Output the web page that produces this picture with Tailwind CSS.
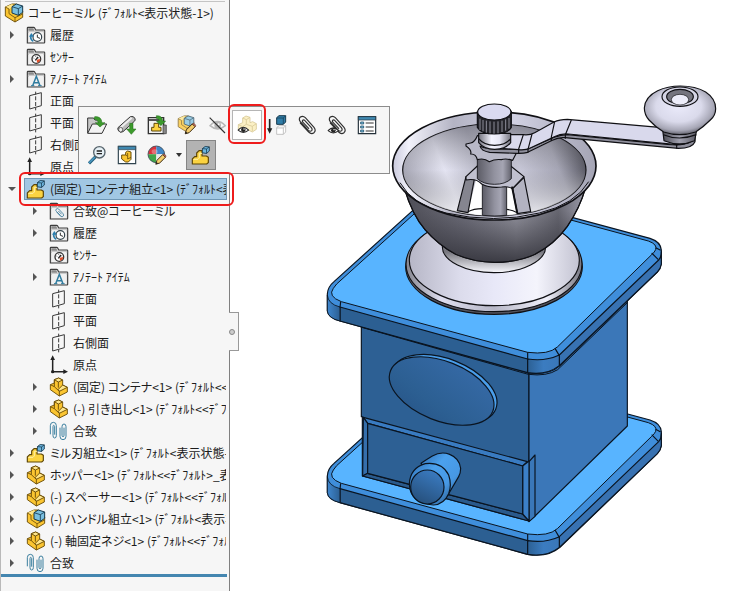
<!DOCTYPE html>
<html lang="ja">
<head>
    <meta charset="UTF-8">
    <meta name="viewport" content="width=device-width, initial-scale=1.0">
    <title>コーヒーミル</title>
    <script src="https://cdn.jsdelivr.net/npm/@tailwindcss/browser@4"></script>
</head>
<body class="bg-white font-['Noto_Sans_CJK_JP',sans-serif] text-[12px] text-[#1c1c1c]">

    <!-- Icon sprites -->
    <svg class="hidden">
        <symbol id="i-folder" viewBox="0 0 60 60">
            <path d="M4 54V9q0-2 2-2h17q2 0 3 2l3 6h25q2 0 2 2v35q0 2-2 2z" fill="#e3e3e3" stroke="#3d3d3d" stroke-width="3.5"/>
            <path d="M7 10h15l3 7H7z" fill="#8a8a8a"/>
            <path d="M5 21h51" stroke="#999" stroke-width="2"/>
            <rect x="9" y="21" width="43" height="30" fill="#f0f0f0"/>
        </symbol>
        <symbol id="i-history" viewBox="0 0 60 60">
            <use href="#i-folder"/>
            <circle cx="34" cy="36" r="13" fill="#fff" stroke="#34444d" stroke-width="3.5"/>
            <path d="M34 29v8l8 3" fill="none" stroke="#333" stroke-width="3"/>
            <path d="M22 49q-10-6-7-17" fill="none" stroke="#2d7fae" stroke-width="5"/>
            <path d="M9 35l7-11 8 11z" fill="#2d7fae"/>
        </symbol>
        <symbol id="i-sensor" viewBox="0 0 60 60">
            <use href="#i-folder"/>
            <circle cx="31" cy="36" r="13" fill="#fff" stroke="#333" stroke-width="4"/>
            <path d="M32 38l11-2q0 9-10 11z" fill="#e0502c"/>
            <path d="M28 40l8-10" stroke="#222" stroke-width="4"/>
            <path d="M22 33l3 1m4-7v3m10 2l-2 1" stroke="#444" stroke-width="2"/>
        </symbol>
        <symbol id="i-note" viewBox="0 0 60 60">
            <use href="#i-folder"/>
            <path d="M20 50l11-28 11 28M25 41h12" fill="none" stroke="#2f7c9f" stroke-width="4.5"/>
            <path d="M15 50h10m11 0h11" stroke="#2f7c9f" stroke-width="3"/>
        </symbol>
        <symbol id="i-matefolder" viewBox="0 0 60 60">
            <use href="#i-folder"/>
            <path d="M23 33l12 13q5 3 8-1 2-4-1-7L29 24q-4-3-8 1-2 3 1 6l13 13m-7-14l10 10" fill="none" stroke="#3a7a9a" stroke-width="2.5"/>
        </symbol>
        <symbol id="i-plane" viewBox="0 0 60 60">
            <path d="M11 14l35-9v39l-35 10z" fill="none" stroke="#3a3a3a" stroke-width="3"/>
            <path d="M29 2v9m0 5v12m0 5v12m0 5v8" stroke="#3a3a3a" stroke-width="3"/>
        </symbol>
        <symbol id="i-origin" viewBox="0 0 60 60">
            <path d="M11 12v38h34" fill="none" stroke="#222" stroke-width="4.5"/>
            <path d="M11 1l7 14H4zM57 50l-14 7V43z" fill="#222"/>
            <circle cx="11" cy="50" r="5" fill="#222"/>
        </symbol>
        <symbol id="i-part" viewBox="0 0 60 60">
            <g stroke="#6b4e08" stroke-width="2.8" stroke-linejoin="round">
                <path d="M16 8l13-5 12 6v15l14 7v14L31 57 4 38V23l12-5z" fill="#fbc531"/>
                <path d="M16 8l13-5 12 6-13 6zM28 37l13-13 14 7-24 12z" fill="#ffe68a"/>
                <path d="M28 15v17M4 23l12 6V8M16 29l15 14v14" fill="none"/>
            </g>
        </symbol>
        <symbol id="i-cube" viewBox="0 0 24 24">
            <path d="M2 8l8-6 12 1v12l-8 7-12-2z" fill="#6db5dd" stroke="#173a4e" stroke-width="2.5" stroke-linejoin="round"/>
            <path d="M2 8l12 1 8-6M14 9v13" fill="none" stroke="#173a4e" stroke-width="2.2"/>
        </symbol>
        <symbol id="i-asm" viewBox="0 0 60 60">
            <path d="M4 57V42l7-7h6V24l7-7h9v16h13l6 4v16l-5 4z" fill="#fbd341" stroke="#5d4607" stroke-width="3.5" stroke-linejoin="round"/>
            <path d="M7 43h14l4-4V25h8" fill="none" stroke="#fff0a8" stroke-width="3"/>
            <use href="#i-cube" x="32" y="2" width="25" height="26"/>
        </symbol>
        <symbol id="i-asmpart" viewBox="0 0 60 60">
            <path d="M4 12l20-9h14l18 22v18L33 57 4 39z" fill="#fbc531" stroke="#6b4e08" stroke-width="2.8" stroke-linejoin="round"/>
            <path d="M4 12l20-9 6 5-15 10z" fill="#ffe68a"/>
            <path d="M4 12l11 6v14l18 12v13M33 44l23-11" fill="none" stroke="#6b4e08" stroke-width="2.5"/>
            <path d="M24 11l13-8 19 6v19l-13 9-19-7z" fill="#79bfe0" stroke="#173a4e" stroke-width="3" stroke-linejoin="round"/>
            <path d="M24 11l19 6 13-8M43 17v20" fill="none" stroke="#173a4e" stroke-width="2.5"/>
        </symbol>
        <symbol id="i-mates" viewBox="0 0 60 60">
            <g fill="none" stroke="#3b7f9e" stroke-width="3">
                <path d="M4 40V14Q4 4 13 4t9 10v30q0 7-5 7t-5-7V17q0-4 2-4t3 4v24"/>
                <path d="M33 20v26q0 10 9 10t9-10V17q0-8-6-8t-6 8v26q0 4 3 4t3-4V20"/>
            </g>
        </symbol>
        <symbol id="i-pencil" viewBox="0 0 30 30">
            <path d="M2 28l3-10L20 3l7 7-15 15z" fill="#f5ce6c" stroke="#3c2b12" stroke-width="2.5" stroke-linejoin="round"/>
            <path d="M20 3l3-2 6 6-2 3z" fill="#d9706a" stroke="#3c2b12" stroke-width="1.5"/>
            <path d="M2 28l2-6 4 4z" fill="#222"/>
        </symbol>
        <symbol id="i-eye" viewBox="0 0 34 22">
            <path d="M2 13Q17-3 32 13 17 26 2 13z" fill="#fff" stroke="#2b2b2b" stroke-width="3"/>
            <circle cx="17" cy="12" r="6.5" fill="#222"/>
            <circle cx="19" cy="10" r="2" fill="#fff"/>
        </symbol>
        <symbol id="i-clip" viewBox="0 0 60 60">
            <path d="M10 24l25 27q8 8 16 2 7-7 0-16L25 8Q18 1 10 6q-6 6 0 14l24 26q6 5 10 1 3-4-1-9L23 16q-4-3-6 0-2 3 1 6l17 18" fill="none" stroke="#2f2f2f" stroke-width="3.5" stroke-linecap="round"/>
        </symbol>
    </svg>

    <div class="relative flex h-screen overflow-hidden">

        <!-- Feature tree -->
        <nav aria-label="FeatureManager" class="relative flex w-[230px] shrink-0 flex-col border-x border-l-[#b9b9b9] border-r-[#808080] bg-[#f6f6f6]">
            <div class="mx-1 h-0.5 border-b border-[#c4c4c4]"></div>
            <ul id="tree" class="mr-0.5"></ul>
            <div class="mr-0.5 h-[3px] bg-[#4486b0]"></div>
            <!-- Panel splitter -->
            <button aria-label="パネルを閉じる" class="absolute top-[312px] -right-2.5 flex h-[39px] w-2.5 items-center border border-l-0 border-[#999] bg-[#f6f6f6]">
                <span class="size-1.5 rounded-full border border-[#888] bg-[#ccc]"></span>
            </button>
        </nav>

        <!-- Graphics area -->
        <main class="min-w-0 flex-1">
            <svg class="h-full w-full" viewBox="0 0 1506 1773" preserveAspectRatio="xMinYMin meet" role="img" aria-label="コーヒーミル">
                <defs>
                    <linearGradient id="g-rim"><stop offset="0" stop-color="#c9c9dc"/><stop offset=".08" stop-color="#f2f2fb"/><stop offset=".3" stop-color="#b4b4c4"/><stop offset=".6" stop-color="#d0d0e2"/><stop offset="1" stop-color="#a4a4b4"/></linearGradient>
                    <linearGradient id="g-in" x1="0" y1=".5" x2="1" y2=".3"><stop offset="0" stop-color="#a6a6b4"/><stop offset=".22" stop-color="#e4e4f2"/><stop offset=".42" stop-color="#b4b4c3"/><stop offset=".62" stop-color="#c6c6d6"/><stop offset=".82" stop-color="#a5a5b4"/><stop offset="1" stop-color="#464650"/></linearGradient>
                    <linearGradient id="g-shade" x1="0" y1="0" x2="0" y2="1"><stop offset="0" stop-color="#555560" stop-opacity=".5"/><stop offset=".5" stop-color="#888" stop-opacity="0"/><stop offset="1" stop-color="#fff" stop-opacity=".7"/></linearGradient>
                    <linearGradient id="g-bowl"><stop offset="0" stop-color="#4c4c55"/><stop offset=".35" stop-color="#70707c"/><stop offset=".62" stop-color="#94949f"/><stop offset=".85" stop-color="#666670"/><stop offset="1" stop-color="#9a9aa8"/></linearGradient>
                    <linearGradient id="g-bowl2" x1="0" y1="0" x2="0" y2="1"><stop offset=".3" stop-color="#33333b" stop-opacity="0"/><stop offset="1" stop-color="#33333b" stop-opacity=".9"/></linearGradient>
                    <linearGradient id="g-cone"><stop offset="0" stop-color="#b6b6c6"/><stop offset=".3" stop-color="#dcdcec"/><stop offset=".5" stop-color="#e8e8f8"/><stop offset=".75" stop-color="#f4f4fc"/><stop offset="1" stop-color="#c3c3d2"/></linearGradient>
                    <linearGradient id="g-edge"><stop offset="0" stop-color="#85858f"/><stop offset=".2" stop-color="#dedeef"/><stop offset=".5" stop-color="#b7b7c7"/><stop offset=".8" stop-color="#f0f0fa"/><stop offset="1" stop-color="#777782"/></linearGradient>
                    <linearGradient id="g-neck" x1="0" y1="0" x2="0" y2="1"><stop offset=".6" stop-color="#77777f"/><stop offset="1" stop-color="#fafaff"/></linearGradient>
                    <linearGradient id="g-shaft"><stop offset="0" stop-color="#5c5c66"/><stop offset=".5" stop-color="#92929f"/><stop offset=".75" stop-color="#a5a5b3"/><stop offset="1" stop-color="#63636e"/></linearGradient>
                    <linearGradient id="g-collar"><stop offset="0" stop-color="#74747f"/><stop offset=".4" stop-color="#f4f4ff"/><stop offset=".65" stop-color="#e6e6f4"/><stop offset="1" stop-color="#777782"/></linearGradient>
                    <linearGradient id="g-gripneck"><stop offset="0" stop-color="#4c4c55"/><stop offset=".5" stop-color="#a2a2b0"/><stop offset="1" stop-color="#5b5b65"/></linearGradient>
                    <radialGradient id="g-grip" cx=".48" cy=".42" r=".58"><stop offset="0" stop-color="#eaeafa"/><stop offset=".55" stop-color="#dadaeb"/><stop offset=".85" stop-color="#a6a6b5"/><stop offset="1" stop-color="#64646f"/></radialGradient>
                    <linearGradient id="g-oval" x1=".2" y1="1" x2=".7" y2="0"><stop offset="0" stop-color="#28578a"/><stop offset=".3" stop-color="#2c5f92"/><stop offset="1" stop-color="#3569a5"/></linearGradient>
                    <linearGradient id="g-knob" x1="0" y1="0" x2="1" y2="1"><stop offset="0" stop-color="#2f6cae"/><stop offset=".35" stop-color="#4ba1ee"/><stop offset=".7" stop-color="#4798e4"/><stop offset="1" stop-color="#285583"/></linearGradient>
                    <linearGradient id="g-face" x1=".3" y1="1" x2=".8" y2="0"><stop offset="0" stop-color="#264f7b"/><stop offset="1" stop-color="#3b7dc4"/></linearGradient>
                    <linearGradient id="g-cl"><stop offset="0" stop-color="#3f87cf"/><stop offset="1" stop-color="#2c5f92"/></linearGradient>
                    <linearGradient id="g-cf"><stop offset="0" stop-color="#2c6094"/><stop offset=".5" stop-color="#3b7cc0"/><stop offset="1" stop-color="#3a77b8"/></linearGradient>

                    <!-- Rounded square board, used for the lid and the foot -->
                    <g id="board" stroke="#0a1420" stroke-width="3.5" stroke-linejoin="round">
                        <path d="M22 407q1-21 20-37L335 105q35-35 78-20L990 240q32 10 34 35v42q-2 14-12 24L720 622q-38 32-97 21L60 488q-36-9-38-30z" fill="#3f8edb"/>
                        <path d="M60 446L623 602v41L60 488z" fill="#2c5f92"/>
                        <path d="M22 410v48q2 21 38 30v-42q-36-9-38-36z" fill="url(#g-cl)" stroke-width="2.5"/>
                        <path d="M718 590L1016 305q8-9 8-25v37q-2 14-12 24L718 622z" fill="#3872b2"/>
                        <path d="M623 602q52 8 95-12v32q-38 30-95 21z" fill="url(#g-cf)"/>
                        <path d="M50 377L345 110q35-30 75-15L985 248q28 10 22 26-3 7-12 15L712 566q-26 24-89 16L64 430q-42-16-24-40z" fill="#58b4ff" stroke-width="3"/>
                        <path d="M62 430l-2 18M623 582v22M705 570l13 22M995 284l20 20M1007 268l15 8" fill="none"/>
                    </g>
                </defs>

                <!-- Foot -->
                <use href="#board" x="270" y="1020"/>

                <!-- Box and drawer -->
                <g transform="translate(270 1020)" stroke="#0a1420" stroke-width="3.5" stroke-linejoin="round">
                    <path d="M124-70L627 60v483L127 408V230h-3z" fill="#2d6094"/>
                    <path d="M627 60l295-180v378L645 528l-18 15z" fill="#3b77b8"/>
                    <path d="M627 545L627 365l18-20v184z" fill="#3a77b8"/>
                    <path d="M130 232l492 133-14 13-465-128z" fill="#397bc1"/>
                    <path d="M130 232l13 18v150l-15 8z" fill="#356fac"/>
                    <path d="M128 408l15-8 465 122 19 21z" fill="#2a5a8c"/>
                    <path d="M608 378l19-15v180l-19-21z" fill="#3c80c8"/>
                    <path d="M143 250l465 128v144L143 400z" fill="#2d6094"/>
                    <ellipse cx="374" cy="146" rx="165" ry="89" transform="rotate(21.6 374 146)" fill="#4a9eea"/>
                    <ellipse cx="365" cy="153" rx="165" ry="89" transform="rotate(21.6 365 153)" fill="url(#g-oval)"/>
                    <path d="M303 370q14-10 34-22 26-15 52-5 30 12 33 42 0 15-6 25l-34 58z" fill="url(#g-knob)"/>
                    <path d="M268 432q2-48 48-61 50-6 70 34 10 30 0 56-14 32-46 34-70-5-72-63z" fill="url(#g-knob)"/>
                    <ellipse cx="322" cy="441" rx="50" ry="51" fill="url(#g-face)"/>
                </g>

                <!-- Lid -->
                <use href="#board" x="270" y="475"/>
                <path d="M395 982L895 1123q55 7 88-14l210-202" fill="none" stroke="#0a1420" stroke-width="3"/>

                <g transform="translate(450 210)" stroke="#101014" stroke-width="3.5" stroke-linejoin="round">
                    <!-- Flange under the bowl -->
                    <ellipse cx="342" cy="590" rx="265" ry="143" fill="#55555f"/>
                    <ellipse cx="342" cy="582" rx="264" ry="143" fill="url(#g-edge)"/>
                    <ellipse cx="343" cy="571" rx="255" ry="136" fill="url(#g-cone)"/>
                    <ellipse cx="342" cy="530" rx="155" ry="78" fill="url(#g-neck)"/>

                    <!-- Bowl -->
                    <path d="M73 355q24 80 62 124 40 46 92 74 55 24 118 24 70 0 120-24 60-32 97-84 38-56 54-114z" fill="url(#g-bowl)"/>
                    <path d="M73 355q24 80 62 124 40 46 92 74 55 24 118 24 70 0 120-24 60-32 97-84 38-56 54-114z" fill="url(#g-bowl2)"/>
                    <ellipse cx="343" cy="288" rx="305" ry="162" fill="url(#g-rim)" stroke-width="5"/>
                    <ellipse cx="343" cy="300" rx="275" ry="138" fill="url(#g-in)"/>
                    <ellipse cx="343" cy="300" rx="275" ry="138" fill="url(#g-shade)" stroke="none"/>
                    <path d="M60 338q38 68 138 91 145 33 280 0 108-26 148-94" fill="none" stroke-width="3"/>

                    <!-- Bracket and shaft -->
                    <path d="M264 428l24-98h22v106q-24-2-46-8zM378 345h20l14 84q-18 5-34 6z" fill="#fff" stroke="none"/>
                    <path d="M262 426q20-10 44-10M380 418q18 2 32 10" fill="none"/>
                    <path d="M307 330h73v106q-35 4-73 0z" fill="url(#g-shaft)" stroke-width="2.5"/>
                    <path d="M258 320l26 2-20 106-32-6z" fill="#85858f"/>
                    <path d="M398 356l34-34 20 103-40 6z" fill="#b3b3c1"/>
                    <path d="M258 320l34-32h100l40 32-35 36q-12-8-32-5-36 4-60-9-16-18-47-12z" fill="#c0c0cf"/>
                    <path d="M396 350l16 80" fill="none" stroke-width="6"/>
                    <path d="M292 240h102v86q-18 17-51 17t-51-17z" fill="url(#g-shaft)" stroke-width="2.5"/>
                    <path d="M258 222l14-3q12-2 20-22h90l18 20q-8 14 8 34l-10 20q-20-7-34-2-20-2-36 6-16-12-36-6-4-18-20-17 4-12-14-24z" fill="#b9b9c8"/>

                    <!-- Crank arm -->
                    <path d="M300 228q18 12 115 9h28l80-35q20-8 40-8l300 29 27 2q46-2 55-24v14q-8 20-50 20l-340-32q-20-2-38 8l-74 36q-14 4-34 3l-80-3q-26-4-29-19z" fill="#8f8f9c"/>
                    <path d="M325 232q30-38 66-38h39q20 2 34-6l58-32q16-8 40-8l285 25 98 22q-4 27-55 29l-325-32q-22-2-42 8l-74 35q-12 6-34 4z" fill="#d9d9ec"/>
                    <path d="M430 194l-14 43v12M456 192l-12 46v10M524 155l-10 46v12M574 150l-18 44v12M890 224v12" fill="none"/>

                    <!-- Grip -->
                    <path d="M848 180h102l-6 32q-46 19-92 0z" fill="url(#g-gripneck)"/>
                    <path d="M850 194q48 20 99 0" fill="none"/>
                    <path d="M793 114q2-34 40-52 30-14 68-14 46 0 76 18 30 20 30 50 0 20-16 34-22 22-44 36-48 16-96 0-24-14-44-36-14-16-14-36z" fill="url(#g-grip)"/>
                    <ellipse cx="900" cy="80" rx="54" ry="29" fill="#d4d4e4"/>
                    <ellipse cx="900" cy="80" rx="40" ry="22" fill="#75757f"/>
                    <ellipse cx="900" cy="89" rx="26" ry="16" fill="#ededfa" stroke-width="2"/>

                    <!-- Thumb screw -->
                    <path d="M296 190v28q16 20 48 20t48-20v-28z" fill="url(#g-collar)"/>
                    <path d="M296 206q16 20 48 20t48-20" fill="none"/>
                    <path d="M292 124v48q12 20 51 20t51-20v-48z" fill="#25252b"/>
                    <path d="M300 146v34M309 150v34M319 152v36M330 154v36M342 155v36M354 154v36M366 152v34M377 148v34M387 144v32" stroke="#8d8d99" stroke-width="3" fill="none"/>
                    <ellipse cx="343" cy="126" rx="50" ry="24" fill="#dadaf0"/>
                </g>
            </svg>
        </main>

        <!-- Context toolbar -->
        <div role="toolbar" class="absolute top-[106px] left-[78px] h-[68px] w-[312px] border border-[#8c8c8c] bg-[#f6f6f6] p-[3px]">
            <div class="flex">
                <button aria-label="開く" class="flex size-[30px] items-center justify-center">
                    <svg class="size-5" viewBox="0 0 60 60"><path d="M2 54V9h18l4 6h12v12" fill="#c7c7c7" stroke="#333" stroke-width="3"/><path d="M2 55l14-28h43L45 55z" fill="#f3f3f3" stroke="#333" stroke-width="3" stroke-linejoin="round"/><path d="M23 5q20-2 22 18h9L39 36 25 23h9q-2-10-13-11z" fill="#3c9a2c" stroke="#1f6a17" stroke-width="1.5"/></svg>
                </button>
                <button aria-label="読み込み" class="flex size-[30px] items-center justify-center">
                    <svg class="size-5" viewBox="0 0 60 60"><path d="M3 38L40 5q9-3 14 5 2 6-2 9L18 50q-8 4-13-2-4-6-2-10z" fill="#b9b9b9" stroke="#333" stroke-width="3"/><path d="M10 38L44 8" stroke="#eee" stroke-width="6"/><ellipse cx="11" cy="44" rx="6" ry="7" fill="#eee" stroke="#333" stroke-width="2"/><path d="M38 25h10v17h9L43 58 29 42h9z" fill="#3c9a2c" stroke="#1f6a17" stroke-width="1.5"/></svg>
                </button>
                <button aria-label="アセンブリを開く" class="flex size-[30px] items-center justify-center">
                    <svg class="size-5" viewBox="0 0 60 60"><path d="M4 8h46v48H4z" fill="#f1f1f1" stroke="#333" stroke-width="4"/><path d="M4 15h34" stroke="#333" stroke-width="5"/><path d="M14 48V37h7V25h14v12h7v11z" fill="#fbd341" stroke="#5d4607" stroke-width="3"/><path d="M48 30h10v26H48z" fill="#888" stroke="#333" stroke-width="2"/><path d="M28 2q18-1 19 16h9L42 32 28 18h10q-2-7-10-8z" fill="#3c9a2c" stroke="#1f6a17" stroke-width="1.5"/></svg>
                </button>
                <button aria-label="編集" class="flex size-[30px] items-center justify-center">
                    <svg class="size-5" viewBox="0 0 60 60"><g opacity=".75"><use href="#i-asmpart" width="54" height="54"/></g><use href="#i-pencil" x="22" y="23" width="36" height="36"/></svg>
                </button>
                <button aria-label="非表示" class="flex size-[30px] items-center justify-center">
                    <svg class="size-5" viewBox="0 0 60 60"><g opacity=".3"><use href="#i-eye" x="6" y="12" width="52" height="34"/></g><path d="M8 8l46 46" stroke="#333" stroke-width="3.5"/></svg>
                </button>
                <button aria-label="構成部品の表示" class="flex size-[30px] items-center justify-center border border-[#b5b5b5] bg-white">
                    <svg class="size-5" viewBox="0 0 60 60"><path d="M17 9l10-6 12 4v16l8-3 11 6v17l-12 8-14-7-15 6-13-7V29l13-6z" fill="#fbf0c5" stroke="#d8ca98" stroke-width="2.5"/><path d="M17 9l11 5 11-7M28 14v14M4 29l13 6 11-7 18 6 12-8M17 35v14M46 34v15" fill="none" stroke="#d8ca98" stroke-width="2.5"/><use href="#i-eye" x="1" y="30" width="36" height="26"/></svg>
                </button>
                <button aria-label="抑制" class="flex size-[30px] items-center justify-center">
                    <svg class="size-5" viewBox="0 0 60 60"><path d="M8 12v34" stroke="#222" stroke-width="5"/><path d="M0 40h16L8 56z" fill="#222"/><path d="M29 8l7-6h20v19l-7 7H29z" fill="#2f7da8" stroke="#173a4e" stroke-width="3"/><path d="M29 9h20l7-7M49 9v19" fill="none" stroke="#143347" stroke-width="2"/><path d="M29 38l7-6h20v19l-7 7H29zM29 39h20l7-7M49 39v19" fill="#fff" stroke="#b8b8b8" stroke-width="2.5"/></svg>
                </button>
                <button aria-label="合致" class="flex size-[30px] items-center justify-center">
                    <svg class="size-5" viewBox="0 0 60 60"><use href="#i-clip"/></svg>
                </button>
                <button aria-label="合致を表示" class="flex size-[30px] items-center justify-center">
                    <svg class="size-5" viewBox="0 0 60 60"><use href="#i-clip"/><use href="#i-eye" x="1" y="32" width="36" height="26"/></svg>
                </button>
                <button aria-label="プロパティ" class="flex size-[30px] items-center justify-center">
                    <svg class="size-5" viewBox="0 0 60 60"><path d="M4 5h52v51H4z" fill="#fff" stroke="#24313a" stroke-width="3.5"/><path d="M4 5h52v10H4z" fill="#3f88b0" stroke="#24313a" stroke-width="2"/><path d="M11 21h9v6h-9zM11 33h9v6h-9zM11 45h9v6h-9z" fill="#7cc0e0" stroke="#24506a" stroke-width="2.5"/><path d="M26 24h24M26 36h24M26 48h24" stroke="#333" stroke-width="3.5"/></svg>
                </button>
            </div>
            <div class="flex">
                <button aria-label="選択アイテムの拡大" class="flex size-[30px] items-center justify-center">
                    <svg class="size-5" viewBox="0 0 60 60"><path d="M6 55l20-20" stroke="#1e5876" stroke-width="9"/><path d="M6 54l18-18" stroke="#4c9cc5" stroke-width="5"/><circle cx="37" cy="22" r="17" fill="#e7f1f6" stroke="#55636b" stroke-width="4"/><path d="M29 18h16m-16 8h16" stroke="#222" stroke-width="4"/></svg>
                </button>
                <button aria-label="プレビュー" class="flex size-[30px] items-center justify-center">
                    <svg class="size-5" viewBox="0 0 60 60"><path d="M4 4h52v52H4z" fill="#fff" stroke="#30444f" stroke-width="3.5"/><path d="M4 4h52v10H4z" fill="#3f88b0" stroke="#30444f" stroke-width="2"/><path d="M14 30h12v-8l6-4 10 3v22l-8 8h-8l-12-9z" fill="#fbc531" stroke="#6b4e08" stroke-width="3" stroke-linejoin="round"/><path d="M26 30l6 4v8l10-5M32 34V24" fill="none" stroke="#6b4e08" stroke-width="2.5"/></svg>
                </button>
                <button aria-label="外観" class="flex size-[30px] items-center justify-center">
                    <svg class="size-5" viewBox="0 0 60 60"><path d="M28 28V3A25 25 0 0 0 3 28z" fill="#d8333c"/><path d="M28 28V3a25 25 0 0 1 25 25z" fill="#3f86c6"/><path d="M28 28H3a25 25 0 0 0 25 25z" fill="#3fa54a"/><path d="M28 28h25a25 25 0 0 1-25 25z" fill="#e9e9e9"/><circle cx="28" cy="28" r="25" fill="none" stroke="#3b4a55" stroke-width="2.5"/><ellipse cx="23" cy="20" rx="9" ry="7" fill="#fff" opacity=".3"/><use href="#i-pencil" x="24" y="25" width="35" height="35"/></svg>
                </button>
                <button aria-label="外観メニュー" class="flex h-[30px] w-3.5 items-center justify-center">
                    <svg class="h-1 w-1.5" viewBox="0 0 6 4"><path d="M0 0h6L3 4z" fill="#333"/></svg>
                </button>
                <button aria-label="アセンブリ" aria-pressed="true" class="flex size-[30px] items-center justify-center border border-[#858585] bg-[#b3b3b3]">
                    <svg class="size-5" viewBox="0 0 60 60"><use href="#i-asm"/></svg>
                </button>
            </div>
        </div>

        <!-- Callout frames -->
        <div class="pointer-events-none absolute top-[104px] left-[228px] h-10 w-[38px] rounded-md border-2 border-[#ee1c1c]"></div>
        <div class="pointer-events-none absolute top-[172px] left-[19px] h-[34px] w-[215px] rounded-md border-2 border-[#ee1c1c]"></div>
    </div>

    <script>
        // level, caret state, icon, label
        const rows = [
            [0, '', 'asmpart', 'コーヒーミル (ﾃﾞﾌｫﾙﾄ<表示状態-1>)'],
            [1, 'closed', 'history', '履歴'],
            [1, '', 'sensor', 'ｾﾝｻｰ'],
            [1, 'closed', 'note', 'ｱﾉﾃｰﾄ ｱｲﾃﾑ'],
            [1, '', 'plane', '正面'],
            [1, '', 'plane', '平面'],
            [1, '', 'plane', '右側面'],
            [1, '', 'origin', '原点'],
            [1, 'open', 'asm', '(固定) コンテナ組立<1> (ﾃﾞﾌｫﾙﾄ<表示状態-1>)'],
            [2, 'closed', 'matefolder', '合致@コーヒーミル'],
            [2, 'closed', 'history', '履歴'],
            [2, '', 'sensor', 'ｾﾝｻｰ'],
            [2, 'closed', 'note', 'ｱﾉﾃｰﾄ ｱｲﾃﾑ'],
            [2, '', 'plane', '正面'],
            [2, '', 'plane', '平面'],
            [2, '', 'plane', '右側面'],
            [2, '', 'origin', '原点'],
            [2, 'closed', 'part', '(固定) コンテナ<1> (ﾃﾞﾌｫﾙﾄ<<ﾃﾞﾌｫﾙﾄ>'],
            [2, 'closed', 'part', '(-) 引き出し<1> (ﾃﾞﾌｫﾙﾄ<<ﾃﾞﾌｫﾙﾄ>'],
            [2, 'closed', 'mates', '合致'],
            [1, 'closed', 'asm', 'ミル刃組立<1> (ﾃﾞﾌｫﾙﾄ<表示状態-1>)'],
            [1, 'closed', 'part', 'ホッパー<1> (ﾃﾞﾌｫﾙﾄ<<ﾃﾞﾌｫﾙﾄ>_表示状態'],
            [1, 'closed', 'part', '(-) スペーサー<1> (ﾃﾞﾌｫﾙﾄ<<ﾃﾞﾌｫﾙﾄ>'],
            [1, 'closed', 'asmpart', '(-) ハンドル組立<1> (ﾃﾞﾌｫﾙﾄ<表示状態-1>)'],
            [1, 'closed', 'part', '(-) 軸固定ネジ<1> (ﾃﾞﾌｫﾙﾄ<<ﾃﾞﾌｫﾙﾄ>'],
            [1, 'closed', 'mates', '合致'],
        ];
        const indent = ['', 'pl-[3px]', 'pl-[26px]'];
        const carets = {
            '': '<span class="w-5 shrink-0"></span>',
            closed: '<button aria-label="展開" class="flex w-5 shrink-0 pl-1.5"><svg class="h-2 w-1" viewBox="0 0 4 8"><path d="M0 0l4 4-4 4z" fill="#555"/></svg></button>',
            open: '<button aria-label="折りたたむ" class="flex w-5 shrink-0 pl-1"><svg class="h-1 w-2" viewBox="0 0 8 4"><path d="M0 0h8L4 4z" fill="#555"/></svg></button>',
        };
        const esc = s => s.replace(/</g, '&lt;').replace(/>/g, '&gt;');

        document.getElementById('tree').innerHTML = rows.map(([level, caret, icon, label]) => `
            <li class="flex h-[22px] items-center overflow-hidden ${indent[level]}">
                ${level ? carets[caret] : ''}
                <span class="flex h-[22px] min-w-0 flex-1 items-center gap-1 overflow-hidden border ${level ? 'pl-px' : 'pl-0.5'} ${caret === 'open' ? 'border-[#6f97b5] bg-[#a1c7e3]' : 'border-transparent'}">
                    <svg class="size-5 shrink-0"><use href="#i-${icon}"/></svg>
                    <span class="whitespace-pre [font-feature-settings:'palt']">${esc(label)}</span>
                </span>
            </li>`).join('');
    </script>
</body>
</html>
